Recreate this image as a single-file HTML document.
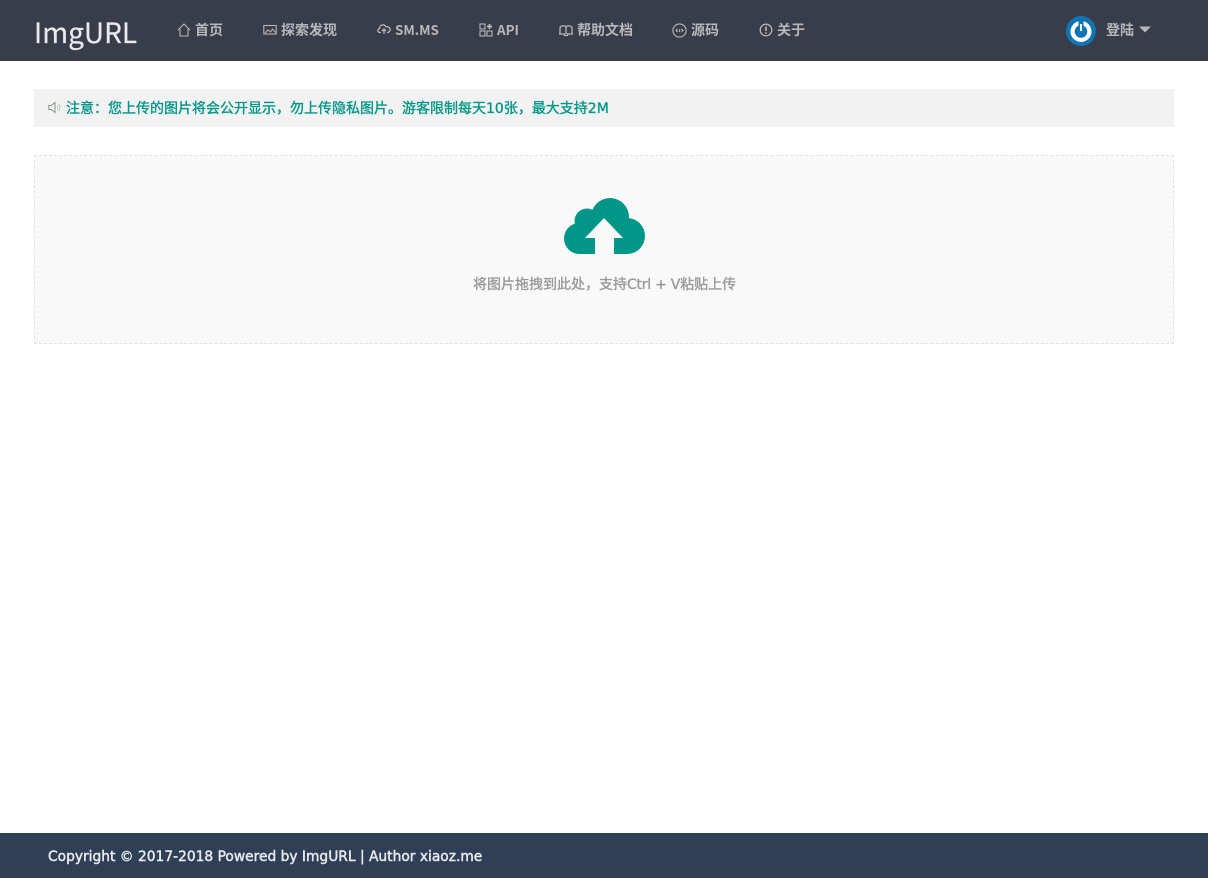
<!DOCTYPE html>
<html lang="zh"><head><meta charset="utf-8"><title>ImgURL</title>
<style>
html,body{margin:0;padding:0;background:#fff}
body{position:relative;width:1208px;height:878px;overflow:hidden;font-family:"DejaVu Sans","Noto Sans CJK SC",sans-serif;font-size:14px}
.abs{position:absolute;white-space:nowrap}
#nav{position:absolute;left:0;top:0;width:1208px;height:61px;background:#393d49}
.logo{left:34px;top:13px;font-family:"Noto Sans CJK SC",sans-serif;font-size:28px;line-height:38px;color:#e8eaee;-webkit-text-stroke:.2px #e8eaee}
.item{top:20px;line-height:20px;color:#b5b7bc;font-family:"Noto Sans CJK SC",sans-serif;font-weight:bold;font-size:14px}
.item.lat{font-size:13.4px;top:19px}
svg.ic{position:absolute;fill:none;stroke:#b5b7bc;stroke-width:1.1}
#note{position:absolute;left:34px;top:89px;width:1140px;height:38px;background:#f2f2f2}
#note .t{left:32px;top:10px;line-height:20px;color:#009688;font-size:14px;-webkit-text-stroke:.35px #009688}
#drop{position:absolute;left:34px;top:155px;width:1138px;height:187px;background:#f9f9f9;border:1px dashed #e2e2e2}
.hint{left:473px;top:275px;line-height:20px;color:#999;font-size:14px;-webkit-text-stroke:.35px #999}
.hint span{letter-spacing:-.25px}
#foot{position:absolute;left:0;top:833px;width:1208px;height:45px;background:#2f4056}
#foot div{left:48px;top:14px;line-height:20px;color:#e8eaee;font-size:13.8px;-webkit-text-stroke:.45px #e8eaee}
</style></head><body>
<div id="nav">
<div class="abs logo">ImgURL</div>

<svg class="ic" style="left:177px;top:23px" width="14" height="14" viewBox="0 0 14 14"><path d="M1 7 7 1l6 6M3 6v7h8V6"/></svg>
<div class="abs item" style="left:195px">首页</div>

<svg class="ic" style="left:263px;top:24px" width="14" height="12" viewBox="0 0 14 12"><rect x=".8" y="1.500" width="12.400" height="8.500"/><path d="M2 9l3-3 2.500 2 2-3 3 3.500"/></svg>
<div class="abs item" style="left:281px">探索发现</div>

<svg class="ic" style="left:377px;top:23px" width="14" height="13" viewBox="0 0 14 13"><path d="M4 9.500H3a2 2 0 0 1-.3-4A3.300 3.300 0 0 1 9 3.800a2.900 2.900 0 0 1 2 5.700h-1M7 11V6M5 8l2-2 2 2" stroke-width="1.300"/></svg>
<div class="abs item lat" style="left:395px">SM.MS</div>

<svg class="ic" style="left:479px;top:23px" width="14" height="14" viewBox="0 0 14 14"><rect x="1" y="1" width="5" height="5"/><rect x="1" y="8" width="5" height="5"/><rect x="8" y="8" width="5" height="5"/><path d="M10.500 1v5M8 3.500h5" stroke-width="1.800"/></svg>
<div class="abs item lat" style="left:497px">API</div>

<svg class="ic" style="left:558px;top:24px" width="16" height="13" viewBox="0 0 16 13"><path d="M2 9.500V4.500C2 1.500 6.500 1 8 3c1.500-2 6-1.500 6 1.500v5M1 10h5.500v1.500h3V10H15M8 3v7" stroke-width="1.300"/></svg>
<div class="abs item" style="left:577px">帮助文档</div>

<svg class="ic" style="left:672px;top:23px" width="15" height="15" viewBox="0 0 15 15"><circle cx="7.500" cy="7.500" r="6.600"/><path d="M5.500 6 4 7.500 5.500 9M9.500 6 11 7.500 9.500 9M8 6l-1 3"/></svg>
<div class="abs item" style="left:691px">源码</div>

<svg class="ic" style="left:759px;top:23px" width="14" height="14" viewBox="0 0 14 14"><circle cx="7" cy="7" r="5.800" stroke-width="1.300"/><path d="M7 3.500v4.500M7 9.300v1.300" stroke-width="1.700"/></svg>
<div class="abs item" style="left:777px">关于</div>

<svg class="abs" style="left:1066px;top:16px" width="30" height="30" viewBox="0 0 30 30"><circle cx="15" cy="15" r="15" fill="#0f75b5"/><circle cx="15" cy="15.500" r="8.400" fill="none" stroke="#fff" stroke-width="4.200"/><path d="M15 5v10" stroke="#0f75b5" stroke-width="5"/><path d="M15 8v7" stroke="#fff" stroke-width="2"/></svg>
<div class="abs item" style="left:1106px">登陆</div>
<svg class="abs" style="left:1139px;top:26px" width="12" height="7" viewBox="0 0 12 7"><path d="M0 .5h12L6 6.500z" fill="#b5b7bc"/></svg>
</div>

<div id="note">
<svg class="abs" style="left:14px;top:12px" width="13" height="13" viewBox="0 0 13 13" fill="none" stroke="#7d9a80" stroke-width="1"><path d="M.8 4.500h2.500L7 1.500v10l-3.700-3H.8z"/><path d="M9 4.500a3 3 0 0 1 0 4M10.500 3a5 5 0 0 1 0 7" stroke="#b9c6ba"/></svg>
<div class="abs t">注意：您上传的图片将会公开显示，勿上传隐私图片。游客限制每天10张，最大支持2M</div>
</div>

<div id="drop"></div>
<svg class="abs" style="left:564px;top:198px" width="81" height="56" viewBox="0 0 81 56"><g fill="#009688"><circle cx="15.500" cy="40.500" r="15.500"/><circle cx="23" cy="23" r="12.500"/><circle cx="46" cy="19" r="19"/><circle cx="63" cy="38" r="18"/><rect x="15" y="25" width="48" height="31"/></g><path fill="#f9f9f9" d="M40 20 59 40H50V56H31V40H21z"/></svg>
<div class="abs hint">将图片拖拽到此处，支持<span>Ctrl + V</span>粘贴上传</div>

<div id="foot"><div class="abs">Copyright © 2017-2018 Powered by ImgURL | Author xiaoz.me</div></div>
</body></html>
